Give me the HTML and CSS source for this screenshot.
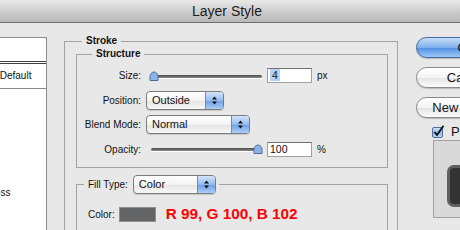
FILE: index.html
```html
<!doctype html>
<html lang="en">
<head>
    <meta charset="UTF-8">
    <title>Layer Style</title>
    <link rel="stylesheet" href="styles.css">
</head>
<body>
    <div class="titlebar">Layer Style</div>

    <div class="dialog">
        <div class="sidebar">
            <div class="styles-row styles-head">Styles</div>
            <div class="styles-row styles-blend">Blending Options: Default</div>
            <div class="styles-row styles-fx">Drop Shadow</div>
            <div class="styles-row styles-fx">Inner Shadow</div>
            <div class="styles-row styles-fx">Outer Glow</div>
            <div class="styles-row styles-fx">Inner Glow</div>
            <div class="styles-row styles-fx">Bevel and Emboss</div>
        </div>

        <fieldset class="group group-stroke">
            <legend>Stroke</legend>

            <fieldset class="group group-structure">
                <legend>Structure</legend>

                <div class="fields">
                    <div class="field-label">Size:</div>
                    <div class="field-control">
                        <div class="slider">
                            <div class="slider-track"></div>
                            <svg class="slider-thumb thumb-min" width="10" height="10" viewBox="0 0 10 10"><path d="M1 9.5V5.5C1 3 3 1 5 1S9 3 9 5.5V9.5Z"/></svg>
                        </div>
                        <div class="num-input"><span class="selected">4</span></div>
                        <span class="unit">px</span>
                    </div>

                    <div class="field-label">Position:</div>
                    <div class="field-control">
                        <div class="popup popup-position">
                            <span class="popup-text">Outside</span>
                            <span class="popup-arrows"><svg width="7" height="11" viewBox="0 0 7 11"><path d="M1 4.5L3.5 1.5L6 4.5ZM1 6.5L3.5 9.5L6 6.5Z"/></svg></span>
                        </div>
                    </div>

                    <div class="field-label">Blend Mode:</div>
                    <div class="field-control">
                        <div class="popup popup-blend">
                            <span class="popup-text">Normal</span>
                            <span class="popup-arrows"><svg width="7" height="11" viewBox="0 0 7 11"><path d="M1 4.5L3.5 1.5L6 4.5ZM1 6.5L3.5 9.5L6 6.5Z"/></svg></span>
                        </div>
                    </div>

                    <div class="field-label">Opacity:</div>
                    <div class="field-control">
                        <div class="slider">
                            <div class="slider-track"></div>
                            <svg class="slider-thumb thumb-max" width="10" height="10" viewBox="0 0 10 10"><path d="M1 9.5V5.5C1 3 3 1 5 1S9 3 9 5.5V9.5Z"/></svg>
                        </div>
                        <div class="num-input">100</div>
                        <span class="unit">%</span>
                    </div>
                </div>
            </fieldset>

            <fieldset class="group group-fill">
                <legend>
                    <span class="fill-label">Fill Type:</span>
                    <span class="popup popup-fill">
                        <span class="popup-text">Color</span>
                        <span class="popup-arrows"><svg width="7" height="11" viewBox="0 0 7 11"><path d="M1 4.5L3.5 1.5L6 4.5ZM1 6.5L3.5 9.5L6 6.5Z"/></svg></span>
                    </span>
                </legend>

                <div class="color-row">
                    <span class="color-label">Color:</span>
                    <span class="swatch"></span>
                    <span class="rgb-note">R 99, G 100, B 102</span>
                </div>
            </fieldset>
        </fieldset>

        <div class="actions">
            <div class="btn btn-default">OK</div>
            <div class="btn">Cancel</div>
            <div class="btn">New Style...</div>
            <div class="check-row">
                <svg width="13" height="13" viewBox="0 0 13 13">
                    <defs>
                        <linearGradient id="cb" x1="0" y1="0" x2="0" y2="1">
                            <stop offset="0" stop-color="#d6e6fa"/>
                            <stop offset="0.5" stop-color="#8fb8ee"/>
                            <stop offset="1" stop-color="#bcd7f7"/>
                        </linearGradient>
                    </defs>
                    <rect x="0.5" y="2.5" width="10" height="10" rx="1.5" fill="url(#cb)" stroke="#4f6f9c"/>
                    <path d="M2.5 7L5 10L11.5 0.8" fill="none" stroke="#111" stroke-width="1.8"/>
                </svg>
                <span>Preview</span>
            </div>
            <div class="preview">
                <div class="preview-shape"></div>
            </div>
        </div>
    </div>
</body>
</html>
```

FILE: styles.css
```css
body{
    margin: 0;
    width: 460px;
    height: 230px;
    overflow: hidden;
    background-color: #e8e8e8;
    font-family: "Liberation Sans", Arial, sans-serif;
    color: #111;
}

.titlebar{
    height: 22px;
    line-height: 23px;
    padding-right: 6px;
    text-align: center;
    font-size: 14px;
    color: #1c1c1c;
    background: linear-gradient(#e9e9e9, #c9c9c9 60%, #b9b9b9);
    border-bottom: 1px solid #6d6d6d;
}

.dialog{
    display: flex;
    align-items: flex-start;
}

.dialog > *{
    flex-shrink: 0;
}

/* left list, cut off by the screenshot */
.sidebar{
    width: 135px;
    height: 200px;
    margin-left: -89px;
    margin-top: 14px;
    background-color: #fff;
    border-top: 1px solid #8c8c8c;
    border-right: 1px solid #8c8c8c;
}

.styles-row{
    height: 23px;
    line-height: 23px;
    font-size: 10px;
    white-space: nowrap;
    padding-left: 16px;
}

.styles-head{
    border-bottom: 3px double #3c3c3c;
}

.styles-blend{
    height: 24px;
    line-height: 24px;
    padding-left: 7px;
    border-bottom: 1px solid #8c8c8c;
}

/* group boxes */
.group{
    margin: 0;
    padding: 0;
    border: 1px solid #a2a2a2;
    min-width: 0;
}

.group legend{
    font-size: 10px;
    font-weight: bold;
    line-height: 12px;
    padding: 0 4px;
}

.group-stroke{
    width: 334px;
    height: 220px;
    box-sizing: border-box;
    margin-left: 17px;
    margin-top: 12px;
    padding: 0 9px 0 11px;
}

.group-stroke > legend{
    margin-left: 6px;
}

.group-structure{
    margin-top: 1px;
    padding: 6px 0 8px 0;
}

.group-structure > legend{
    margin-left: 15px;
}

.fields{
    display: grid;
    grid-template-columns: 64px 1fr;
    grid-auto-rows: 19px;
    column-gap: 5px;
    row-gap: 5.5px;
    align-items: center;
}

.field-label{
    text-align: right;
    font-size: 10px;
}

.field-control{
    display: flex;
    align-items: center;
}

.slider{
    position: relative;
    width: 114px;
    height: 10px;
    margin-left: 3px;
}

.slider-track{
    position: absolute;
    left: 2px;
    right: 1px;
    top: 4px;
    height: 3px;
    border-radius: 2px;
    background: linear-gradient(#4a4a4a, #8a8a8a);
    box-shadow: 0 1px 0 #fff;
}

.slider-thumb{
    position: absolute;
    top: 0;
    fill: #8db4e8;
    stroke: #4b6d9c;
    stroke-width: 1;
}

.thumb-min{
    left: 0;
}

.thumb-max{
    right: 0;
}

.num-input{
    width: 45px;
    height: 15px;
    box-sizing: border-box;
    margin-left: 4px;
    padding-left: 2px;
    background-color: #fff;
    border: 1px solid #a0a0a0;
    border-top-color: #707070;
    font-size: 10.5px;
    line-height: 13px;
}

.selected{
    background-color: #b5d3f7;
    padding: 0 2px;
}

.unit{
    margin-left: 5px;
    font-size: 10px;
}

/* aqua popup menus */
.popup{
    display: flex;
    height: 19px;
    box-sizing: border-box;
    border: 1px solid #7c7c7c;
    border-radius: 4px;
    overflow: hidden;
    background: linear-gradient(#ffffff, #f3f3f3 50%, #e4e4e4 51%, #f7f7f7);
    box-shadow: 0 1px 1px rgba(0, 0, 0, 0.15);
}

.popup-text{
    flex: 1;
    padding-left: 5px;
    font-size: 11px;
    font-weight: normal;
    line-height: 17px;
}

.popup-arrows{
    width: 17px;
    display: flex;
    align-items: center;
    justify-content: center;
    border-left: 1px solid #6c8cbc;
    background: linear-gradient(#d3e4f9, #93bbef 50%, #6d9fe5 51%, #a9cdf6);
    fill: #111;
}

.popup-position{
    width: 78px;
}

.popup-blend{
    width: 104px;
}

.popup-fill{
    width: 83px;
    margin-left: 5px;
}

.group-fill{
    height: 60px;
    margin-top: 7px;
    padding: 13px 0 0 11px;
}

.group-fill > legend{
    display: flex;
    align-items: center;
    margin-left: -4px;
    padding: 0 3px 0 4px;
    line-height: 19px;
}

.fill-label{
    font-weight: normal;
}

.color-row{
    display: flex;
    align-items: center;
    height: 15px;
}

.color-label{
    font-size: 10px;
}

.swatch{
    width: 37px;
    height: 15px;
    box-sizing: border-box;
    margin-left: 4px;
    background-color: #636466;
    border: 1px solid #8e8e8e;
}

.rgb-note{
    margin-left: 10px;
    color: #ff0000;
    font-weight: bold;
    font-size: 15.3px;
}

/* buttons column */
.actions{
    width: 102px;
    margin-left: 18px;
    margin-top: 14px;
    display: flex;
    flex-direction: column;
}

.btn{
    height: 21px;
    box-sizing: border-box;
    margin-bottom: 9px;
    border: 1px solid #8a8a8a;
    border-radius: 11px;
    text-align: center;
    font-size: 13px;
    line-height: 19px;
    background: linear-gradient(#ffffff, #f4f4f4 50%, #e3e3e3 51%, #fbfbfb);
    box-shadow: 0 1px 1px rgba(0, 0, 0, 0.2);
}

.btn-default{
    border-color: #3f6aa3;
    background: linear-gradient(#c8def8, #7fb0ee 50%, #4f8fe4 51%, #9cc8f7);
}

.check-row{
    display: flex;
    align-items: center;
    height: 13px;
    margin-top: -2px;
    margin-left: 16px;
    font-size: 13px;
}

.check-row span{
    margin-left: 6px;
}

.preview{
    width: 70px;
    height: 78px;
    box-sizing: border-box;
    margin-top: 2px;
    margin-left: 17px;
    padding: 24px 0 0 13px;
    background-color: #d9d9d9;
    border: 1px solid #a0a0a0;
}

.preview-shape{
    width: 50px;
    height: 42px;
    box-sizing: border-box;
    border-radius: 7px;
    background-color: #333;
    border: 3px solid #5f5f5f;
}
```
